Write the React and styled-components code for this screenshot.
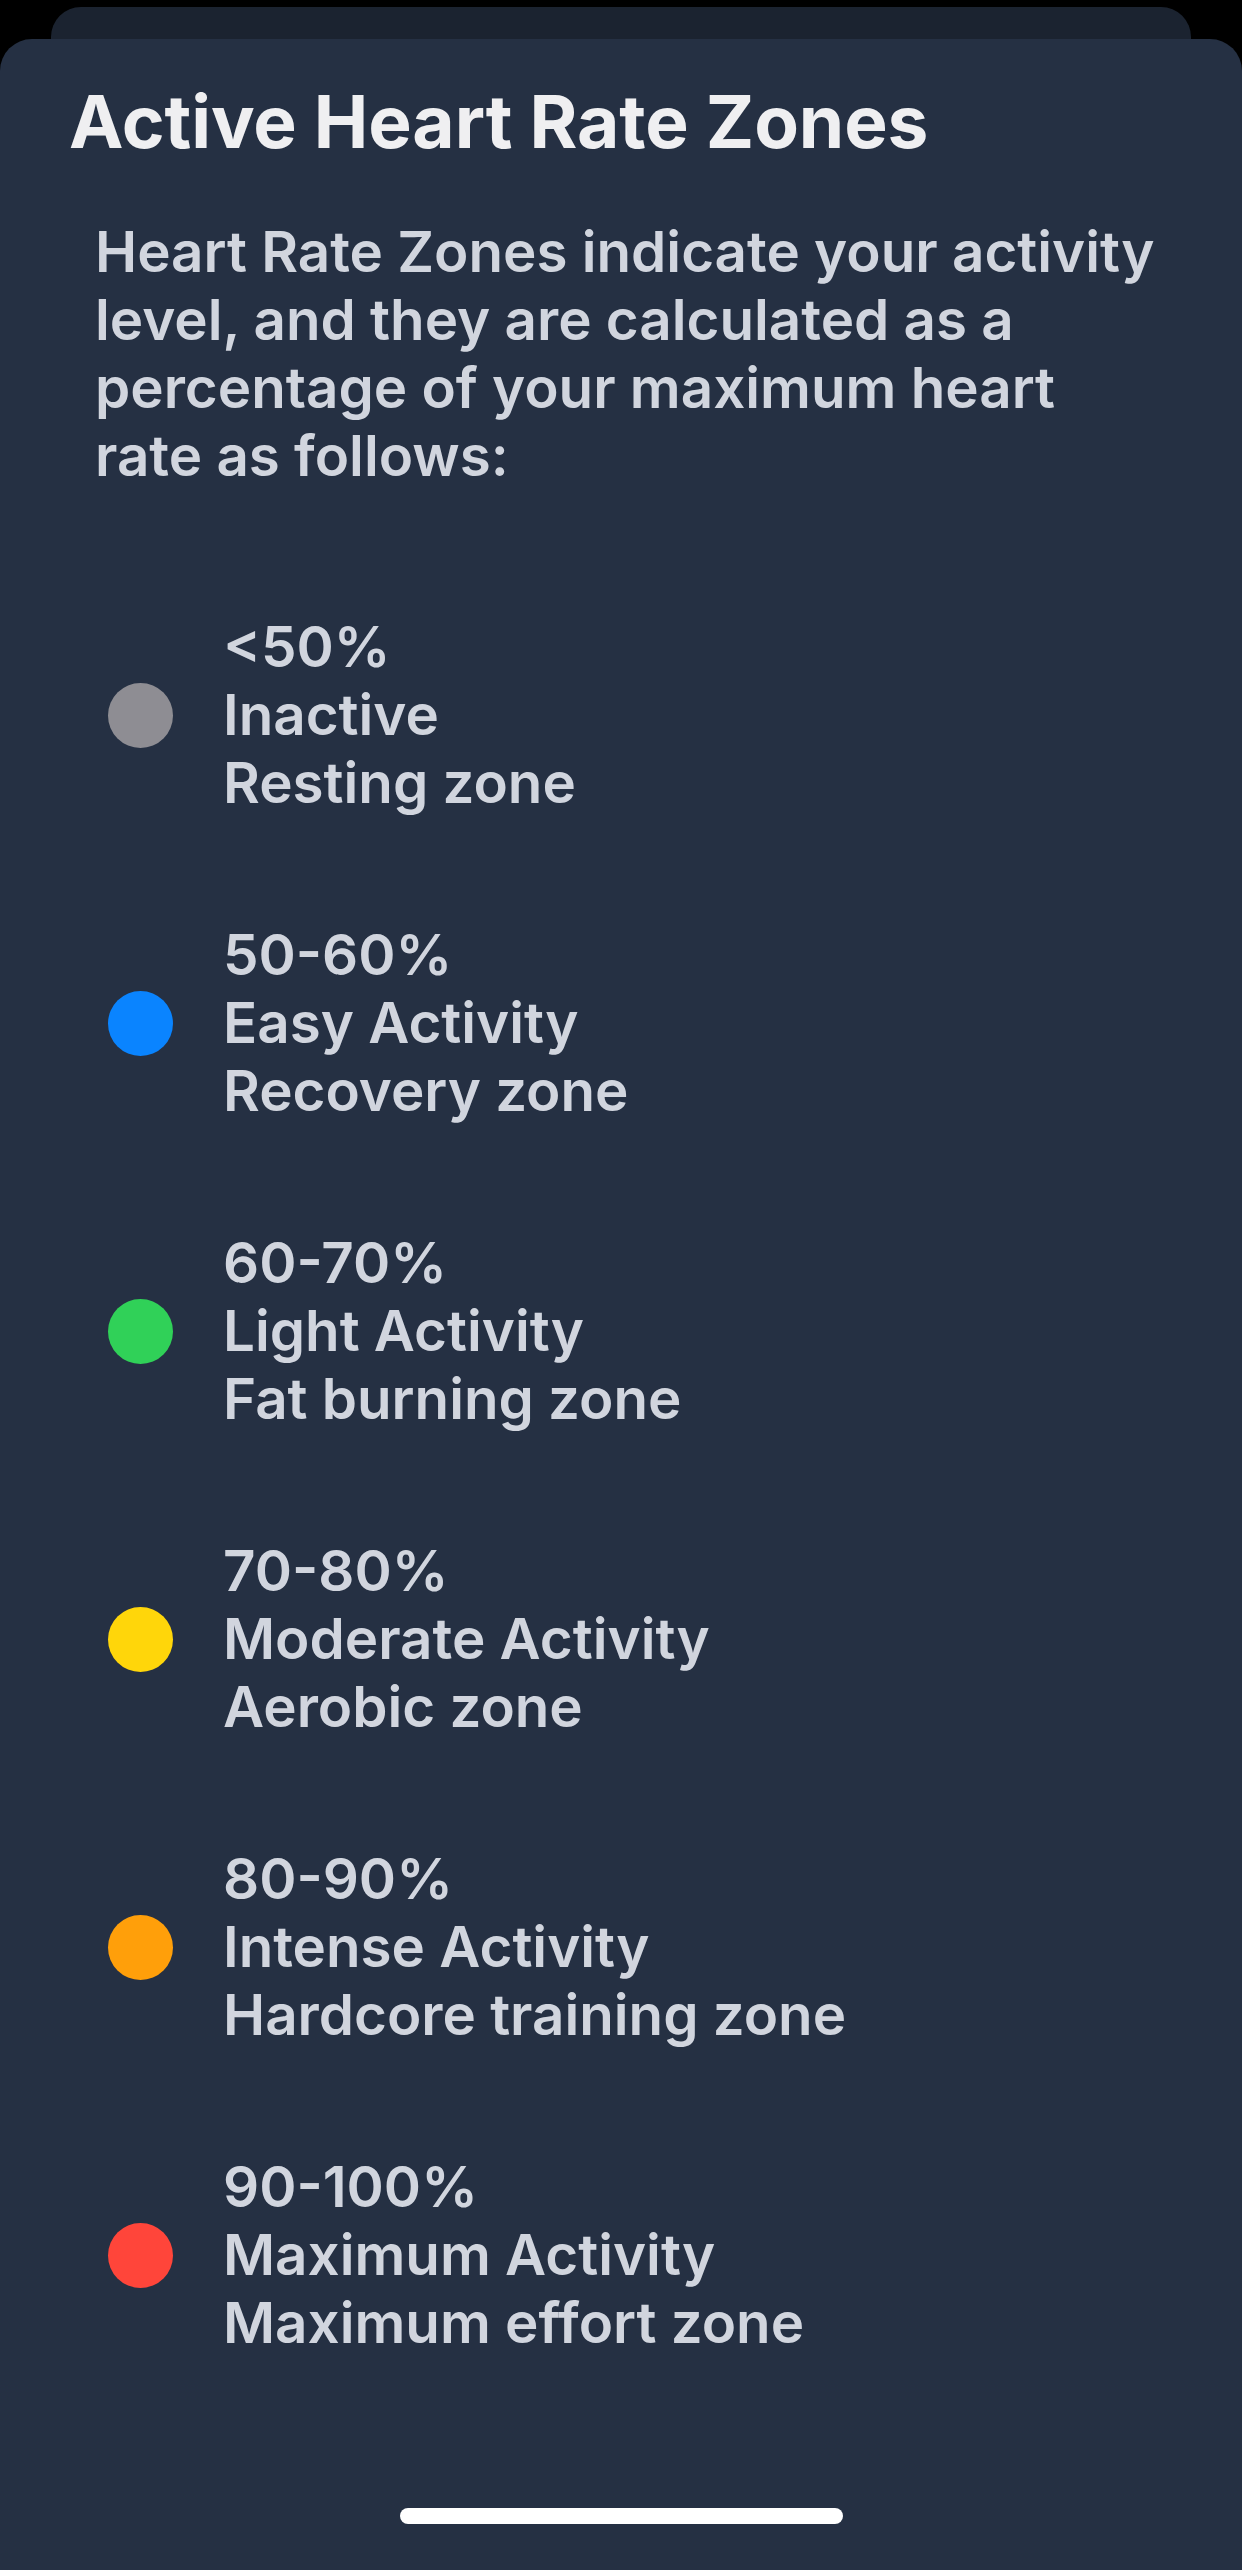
import React from 'react';
import styled, { createGlobalStyle } from 'styled-components';

const GlobalStyle = createGlobalStyle`
    body {
        margin: 0;
        background: #000;
        font-family: 'Inter', 'Noto Sans', sans-serif;
        -webkit-font-smoothing: antialiased;
    }
`;

const Screen = styled.div`
    min-height: 100vh;
    display: flex;
    flex-direction: column;
    background: #000;
`;

const BackSheet = styled.div`
    height: 32px;
    margin: 7px 51px 0;
    background: #1b2330;
    border-radius: 30px 30px 0 0;
`;

const Sheet = styled.div`
    flex: 1;
    display: flex;
    flex-direction: column;
    background: #253043;
    border-radius: 32px 32px 0 0;
    padding: 40px 69px 46px;
`;

const Title = styled.h1`
    margin: 0;
    font-size: 73px;
    line-height: 86px;
    font-weight: 700;
    color: #efeff1;
    letter-spacing: -0.1px;
`;

const Intro = styled.p`
    margin: 53px 0 0 26px;
    font-size: 56.5px;
    line-height: 68px;
    font-weight: 600;
    color: #d1d5de;
`;

const ZoneList = styled.ul`
    list-style: none;
    margin: 123px 0 0;
    padding: 0 0 0 39px;
    display: flex;
    flex-direction: column;
    gap: 104px;
`;

const Zone = styled.li`
    display: flex;
    align-items: center;
    gap: 50px;
`;

const Dot = styled.span`
    flex: none;
    width: 65px;
    height: 65px;
    border-radius: 50%;
    background: ${p => p.$color};
`;

const ZoneText = styled.div`
    display: flex;
    flex-direction: column;
    font-size: 56.5px;
    line-height: 68px;
    font-weight: 600;
    color: #d1d5de;
`;

const HomeBar = styled.div`
    margin-top: auto;
    align-self: center;
    width: 443px;
    height: 16px;
    border-radius: 8px;
    background: #fff;
`;

const zones = [
    { range: '<50%', name: 'Inactive', desc: 'Resting zone', color: '#8e8d93' },
    { range: '50-60%', name: 'Easy Activity', desc: 'Recovery zone', color: '#0a84ff' },
    { range: '60-70%', name: 'Light Activity', desc: 'Fat burning zone', color: '#30d158' },
    { range: '70-80%', name: 'Moderate Activity', desc: 'Aerobic zone', color: '#ffd60a' },
    { range: '80-90%', name: 'Intense Activity', desc: 'Hardcore training zone', color: '#ff9f0a' },
    { range: '90-100%', name: 'Maximum Activity', desc: 'Maximum effort zone', color: '#ff453a' },
];

const App = () => {
    return (
        <Screen>
            <GlobalStyle />
            <BackSheet />
            <Sheet>
                <Title>Active Heart Rate Zones</Title>
                <Intro>
                    Heart Rate Zones indicate your activity level, and they are calculated as a
                    percentage of your maximum heart rate as follows:
                </Intro>
                <ZoneList>
                    {zones.map(z => (
                        <Zone key={z.range}>
                            <Dot $color={z.color} />
                            <ZoneText>
                                <span>{z.range}</span>
                                <span>{z.name}</span>
                                <span>{z.desc}</span>
                            </ZoneText>
                        </Zone>
                    ))}
                </ZoneList>
                <HomeBar />
            </Sheet>
        </Screen>
    );
};

export default App;
